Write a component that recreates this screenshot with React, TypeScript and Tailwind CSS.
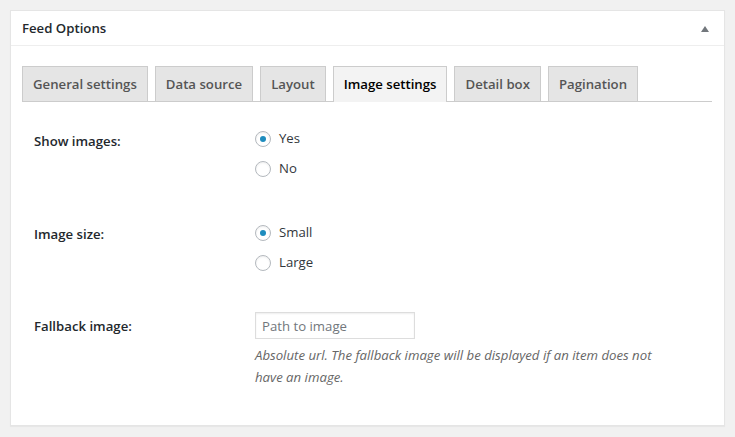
import { useState } from "react";

const tabs = ["General settings", "Data source", "Layout", "Image settings", "Detail box", "Pagination"];

const Radio = ({ label, checked, onClick }: { label: string; checked: boolean; onClick: () => void }) => (
  <label className="flex h-[30px] items-center cursor-pointer" onClick={onClick}>
    <span className="flex h-4 w-4 items-center justify-center rounded-full border border-[#b4b9be] bg-white shadow-[inset_0_1px_2px_rgba(0,0,0,0.07)]">
      {checked && <span className="h-[6px] w-[6px] rounded-full bg-[#1e8cbe]" />}
    </span>
    <span className="ml-[8px] text-[13.2px] text-[#32373c]">{label}</span>
  </label>
);

export default function App() {
  const [active, setActive] = useState(3);
  const [show, setShow] = useState("yes");
  const [size, setSize] = useState("small");

  return (
    <div className="min-h-[437px] w-full bg-[#f1f1f1] px-[10px] pt-[10px] pb-[11px] font-['Open_Sans',sans-serif]">
      <div className="border border-[#e5e5e5] bg-white shadow-[0_1px_1px_rgba(0,0,0,0.04)]">
        <div className="flex h-[35px] items-center justify-between border-b border-[#eee] px-[11px] pt-[2px]">
          <h2 className="text-[13.2px] font-semibold text-[#23282d]">Feed Options</h2>
          <span className="mr-[4px] h-0 w-0 border-x-[4px] border-b-[6px] border-x-transparent border-b-[#72777c]" />
        </div>

        <div className="px-[11px] pt-[20px]">
          <div className="mr-[1px] flex gap-[7px] border-b border-[#ccc] pr-[1px]">
            {tabs.map((t, i) => (
              <button
                key={t}
                onClick={() => setActive(i)}
                className={
                  i === active
                    ? "-mb-px h-[36px] border border-b-0 border-[#ccc] bg-[#f3f3f3] px-[10px] pt-[1px] text-[13.2px] font-semibold text-black"
                    : "h-[35px] border border-[#ccc] border-b-0 bg-[#e5e5e5] px-[10px] pt-[2px] text-[13.2px] font-semibold text-[#555]"
                }
              >
                {t}
              </button>
            ))}
          </div>
        </div>

        <div className="px-[23px] pt-[22px] pb-[37px]">
          <div className="flex">
            <div className="w-[221px] pt-[7px] text-[13.2px] leading-[20px] font-semibold text-[#23282d]">Show images:</div>
            <div>
              <Radio label="Yes" checked={show === "yes"} onClick={() => setShow("yes")} />
              <Radio label="No" checked={show === "no"} onClick={() => setShow("no")} />
            </div>
          </div>

          <div className="mt-[34px] flex">
            <div className="w-[221px] pt-[6px] text-[13.2px] leading-[20px] font-semibold text-[#23282d]">Image size:</div>
            <div>
              <Radio label="Small" checked={size === "small"} onClick={() => setSize("small")} />
              <Radio label="Large" checked={size === "large"} onClick={() => setSize("large")} />
            </div>
          </div>

          <div className="mt-[34px] flex">
            <div className="w-[221px] pt-[4px] text-[13.2px] leading-[20px] font-semibold text-[#23282d]">Fallback image:</div>
            <div>
              <input
                type="text"
                placeholder="Path to image"
                className="h-[27px] w-[160px] border border-[#ddd] px-[6px] text-[13.2px] text-[#32373c] shadow-[inset_0_1px_2px_rgba(0,0,0,0.07)] outline-none placeholder:text-[#72777c]"
              />
              <p className="mt-[5px] text-[13.2px] leading-[22px] italic text-[#666]">
                Absolute url. The fallback image will be displayed if an item does not
                <br />
                have an image.
              </p>
            </div>
          </div>
        </div>
      </div>
    </div>
  );
}
